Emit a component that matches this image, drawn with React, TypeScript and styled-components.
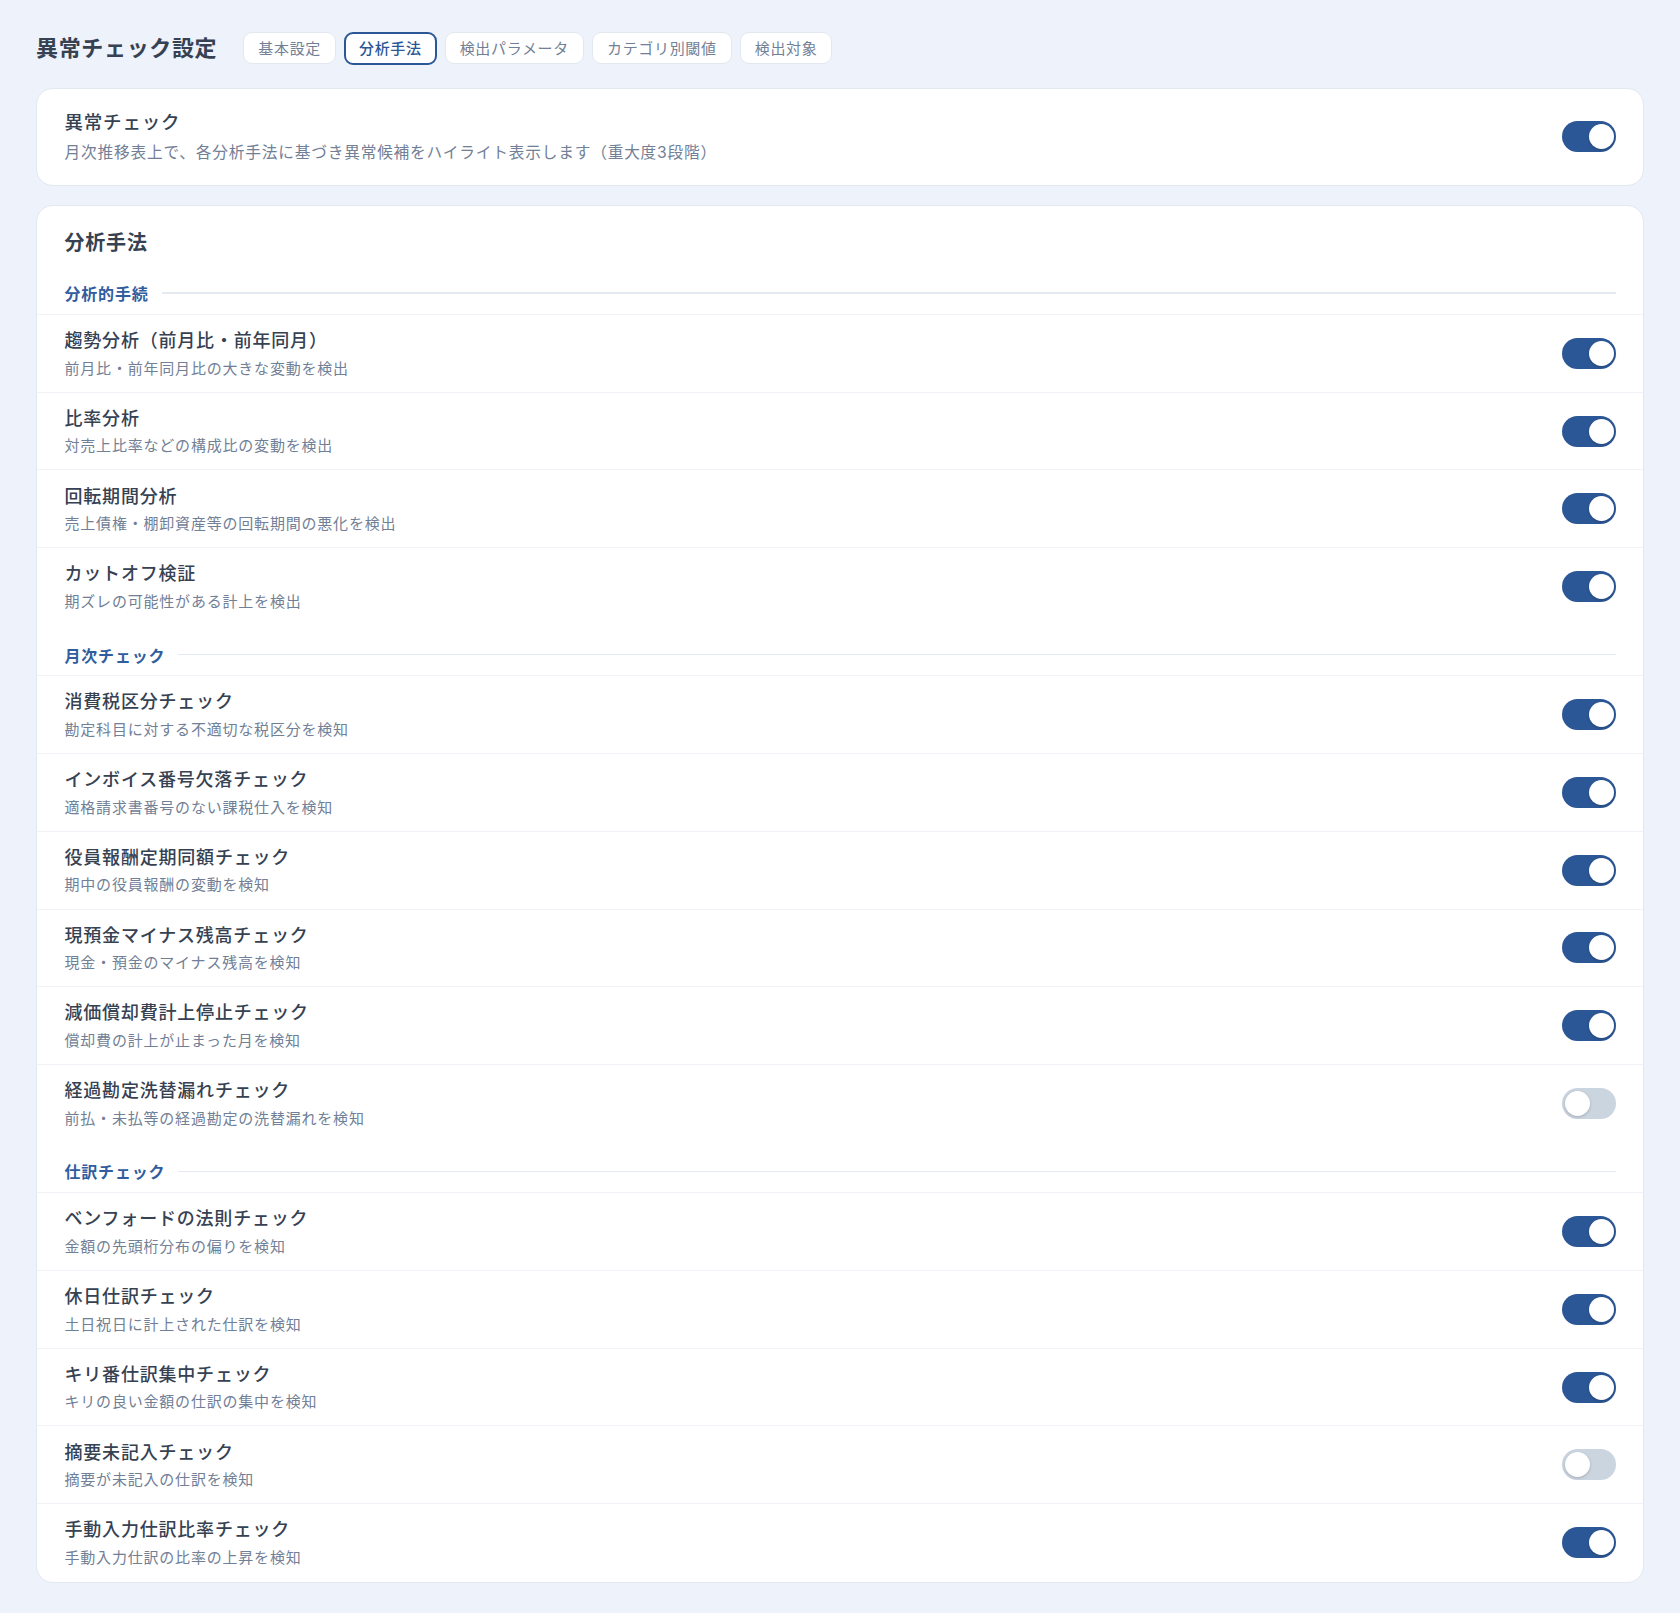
import { useState } from "react";
import styled, { createGlobalStyle } from "styled-components";

const GlobalStyle = createGlobalStyle`
  html, body {
    margin: 0;
    padding: 0;
    background: #edf2fb;
  }
  body {
    font-family: "Inter", "Noto Sans CJK JP", sans-serif;
    letter-spacing: 0.05em;
    color: #364152;
  }
  * {
    box-sizing: border-box;
  }
`;

type Item = { title: string; desc: string; on: boolean };
type Section = { label: string; items: Item[] };

const tabs = ["基本設定", "分析手法", "検出パラメータ", "カテゴリ別閾値", "検出対象"];

const sections: Section[] = [
  {
    label: "分析的手続",
    items: [
      { title: "趨勢分析（前月比・前年同月）", desc: "前月比・前年同月比の大きな変動を検出", on: true },
      { title: "比率分析", desc: "対売上比率などの構成比の変動を検出", on: true },
      { title: "回転期間分析", desc: "売上債権・棚卸資産等の回転期間の悪化を検出", on: true },
      { title: "カットオフ検証", desc: "期ズレの可能性がある計上を検出", on: true },
    ],
  },
  {
    label: "月次チェック",
    items: [
      { title: "消費税区分チェック", desc: "勘定科目に対する不適切な税区分を検知", on: true },
      { title: "インボイス番号欠落チェック", desc: "適格請求書番号のない課税仕入を検知", on: true },
      { title: "役員報酬定期同額チェック", desc: "期中の役員報酬の変動を検知", on: true },
      { title: "現預金マイナス残高チェック", desc: "現金・預金のマイナス残高を検知", on: true },
      { title: "減価償却費計上停止チェック", desc: "償却費の計上が止まった月を検知", on: true },
      { title: "経過勘定洗替漏れチェック", desc: "前払・未払等の経過勘定の洗替漏れを検知", on: false },
    ],
  },
  {
    label: "仕訳チェック",
    items: [
      { title: "ベンフォードの法則チェック", desc: "金額の先頭桁分布の偏りを検知", on: true },
      { title: "休日仕訳チェック", desc: "土日祝日に計上された仕訳を検知", on: true },
      { title: "キリ番仕訳集中チェック", desc: "キリの良い金額の仕訳の集中を検知", on: true },
      { title: "摘要未記入チェック", desc: "摘要が未記入の仕訳を検知", on: false },
      { title: "手動入力仕訳比率チェック", desc: "手動入力仕訳の比率の上昇を検知", on: true },
    ],
  },
];

const Toggle = ({ initial }: { initial: boolean }) => {
  const [on, setOn] = useState(initial);
  return (
    <Track type="button" $on={on} onClick={() => setOn(!on)}>
      <Knob $on={on} />
    </Track>
  );
};

export default function App() {
  const [active, setActive] = useState("分析手法");

  return (
    <>
      <GlobalStyle />
      <Page>
        <Header>
          <PageTitle>異常チェック設定</PageTitle>
          <Tabs>
            {tabs.map((tab) => (
              <Tab key={tab} type="button" $active={tab === active} onClick={() => setActive(tab)}>
                {tab}
              </Tab>
            ))}
          </Tabs>
        </Header>

        <MasterCard>
          <RowText>
            <MasterTitle>異常チェック</MasterTitle>
            <MasterDesc>月次推移表上で、各分析手法に基づき異常候補をハイライト表示します（重大度3段階）</MasterDesc>
          </RowText>
          <Toggle initial={true} />
        </MasterCard>

        <MethodCard>
          <CardTitle>分析手法</CardTitle>
          {sections.map((section) => (
            <div key={section.label}>
              <SectionHead>
                <SectionLabel>{section.label}</SectionLabel>
                <SectionLine />
              </SectionHead>
              {section.items.map((item) => (
                <Row key={item.title}>
                  <RowText>
                    <RowTitle>{item.title}</RowTitle>
                    <RowDesc>{item.desc}</RowDesc>
                  </RowText>
                  <Toggle initial={item.on} />
                </Row>
              ))}
            </div>
          ))}
        </MethodCard>
      </Page>
    </>
  );
}

const Page = styled.div`
  padding: 32px 36px;
  min-height: 1613px;
  display: flex;
  flex-direction: column;
  gap: 19px;
`;

const Header = styled.header`
  display: flex;
  align-items: center;
  gap: 26px;
  height: 32px;
  margin-bottom: 4.5px;
`;

const PageTitle = styled.h1`
  margin: 0;
  font-size: 22px;
  font-weight: 700;
  line-height: 32px;
  letter-spacing: 0.03em;
`;

const Tabs = styled.nav`
  display: flex;
  align-items: center;
  gap: 8px;
`;

const Tab = styled.button<{ $active: boolean }>`
  height: ${(p) => (p.$active ? "33px" : "32px")};
  padding: ${(p) => (p.$active ? "0 13px 2px" : "0 14px 2px")};
  background: #fff;
  border: ${(p) => (p.$active ? "2px solid #2c5796" : "1.5px solid #e2e8f0")};
  border-radius: 9px;
  font-family: inherit;
  font-size: 15px;
  font-weight: ${(p) => (p.$active ? 500 : 400)};
  letter-spacing: 0.045em;
  color: ${(p) => (p.$active ? "#2c5796" : "#718096")};
  cursor: pointer;
`;

const Card = styled.section`
  background: #fff;
  border: 1.5px solid #e2e8f2;
  border-radius: 17px;
`;

const MasterCard = styled(Card)`
  display: flex;
  align-items: center;
  justify-content: space-between;
  height: 98.5px;
  padding: 0 27px 0 27.5px;
`;

const MethodCard = styled(Card)`
  padding-top: 22px;
  padding-bottom: 1px;
  overflow: hidden;
`;

const CardTitle = styled.h2`
  margin: 0 27px 5.5px 27.5px;
  font-size: 20px;
  font-weight: 700;
  line-height: 30px;
`;

const SectionHead = styled.div`
  display: flex;
  align-items: center;
  gap: 13px;
  height: 50.4px;
  padding: 9px 27px 0 27.5px;
`;

const SectionLabel = styled.span`
  font-size: 16px;
  font-weight: 700;
  color: #315d9e;
`;

const SectionLine = styled.span`
  flex: 1;
  height: 1.5px;
  background: #e5e9f0;
`;

const Row = styled.div`
  display: flex;
  align-items: center;
  justify-content: space-between;
  height: 77.75px;
  padding: 0 27px 0 27.5px;
  border-top: 1px solid #eff2f6;
`;

const RowText = styled.div`
  display: flex;
  flex-direction: column;
`;

const MasterTitle = styled.div`
  font-size: 18.5px;
  font-weight: 500;
  line-height: 28px;
`;

const MasterDesc = styled.div`
  margin-top: 4px;
  font-size: 15.7px;
  line-height: 26px;
  color: #718096;
`;

const RowTitle = styled.div`
  font-size: 18px;
  font-weight: 500;
  line-height: 27px;
`;

const RowDesc = styled.div`
  margin-top: 2.5px;
  font-size: 15px;
  line-height: 23px;
  color: #718096;
`;

const Track = styled.button<{ $on: boolean }>`
  position: relative;
  flex-shrink: 0;
  width: 54px;
  height: 31px;
  padding: 0;
  border: none;
  border-radius: 15.5px;
  background: ${(p) => (p.$on ? "#2c5796" : "#cbd5e0")};
  cursor: pointer;
`;

const Knob = styled.span<{ $on: boolean }>`
  position: absolute;
  top: 3px;
  left: ${(p) => (p.$on ? "26.5px" : "2.5px")};
  width: 25px;
  height: 25px;
  border-radius: 50%;
  background: #fff;
  box-shadow: 0 1px 3px rgba(0, 0, 0, 0.2);
`;
